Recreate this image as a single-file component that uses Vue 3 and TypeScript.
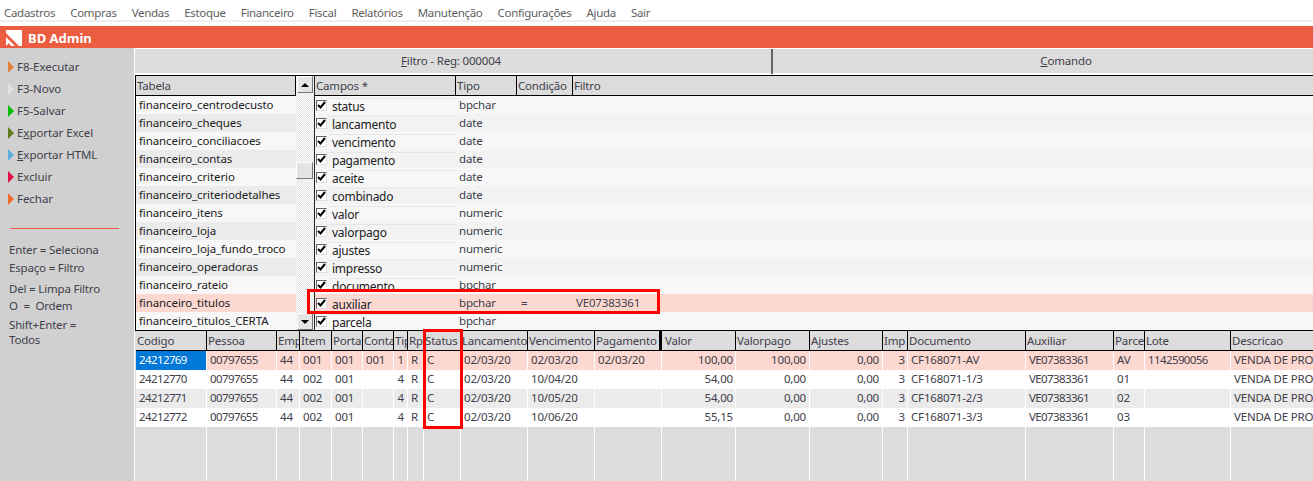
<script setup lang="ts">
const menus = ['Cadastros','Compras','Vendas','Estoque','Financeiro','Fiscal','Relatórios','Manutenção','Configurações','Ajuda','Sair']
const actions = [
  { pre:'F8-Executar', u:'', post:'', color:'#e0803c' },
  { pre:'F3-Novo', u:'', post:'', color:'#e2e2e2' },
  { pre:'F5-Salvar', u:'', post:'', color:'#00c000' },
  { pre:'E', u:'x', post:'portar Excel', color:'#5f7f1f' },
  { pre:'', u:'E', post:'xportar HTML', color:'#5aaedc' },
  { pre:'Excluir', u:'', post:'', color:'#e01048' },
  { pre:'Fechar', u:'', post:'', color:'#f06a30' },
]
const tables = ['financeiro_centrodecusto','financeiro_cheques','financeiro_conciliacoes','financeiro_contas','financeiro_criterio','financeiro_criteriodetalhes','financeiro_itens','financeiro_loja','financeiro_loja_fundo_troco','financeiro_operadoras','financeiro_rateio','financeiro_titulos','financeiro_titulos_CERTA']
const fields = [
  ['status','bpchar'],['lancamento','date'],['vencimento','date'],['pagamento','date'],['aceite','date'],['combinado','date'],['valor','numeric'],['valorpago','numeric'],['ajustes','numeric'],['impresso','numeric'],['documento','bpchar'],['auxiliar','bpchar','=','VE07383361'],['parcela','bpchar'],
]
const cols = [
  ['Codigo',71],['Pessoa',70],['Emp',23],['Item',32],['Porta',31],['Conta',31],['Tip',14],['Rp',16],['Status',37],['Lancamento',67],['Vencimento',67],['Pagamento',67],['Valor',74],['Valorpago',74],['Ajustes',73],['Imp',25],['Documento',118],['Auxiliar',88],['Parce',31],['Lote',86],['Descricao',120],
] as [string, number][]
const gridCols = cols.map(c => c[1] + 'px').join(' ')
const right = new Set([12,13,14,15,6])
const tight = new Set([0,1,17,19])
const snug = new Set([12,15])
const rows = [
  ['24212769','00797655','44','001','001','001','1','R','C','02/03/20','02/03/20','02/03/20','100,00','100,00','0,00','3','CF168071-AV','VE07383361','AV','1142590056','VENDA DE PRODUTOS'],
  ['24212770','00797655','44','002','001','','4','R','C','02/03/20','10/04/20','','54,00','0,00','0,00','3','CF168071-1/3','VE07383361','01','','VENDA DE PRODUTOS'],
  ['24212771','00797655','44','002','001','','4','R','C','02/03/20','10/05/20','','54,00','0,00','0,00','3','CF168071-2/3','VE07383361','02','','VENDA DE PRODUTOS'],
  ['24212772','00797655','44','002','001','','4','R','C','02/03/20','10/06/20','','55,15','0,00','0,00','3','CF168071-3/3','VE07383361','03','','VENDA DE PRODUTOS'],
]
</script>

<template>
  <div class="app">
    <nav class="menu"><span v-for="m in menus" :key="m">{{ m }}</span></nav>
    <header class="brand">
      <svg width="16" height="16" viewBox="0 0 16 16"><path d="M0 0H16V16H13L0 3Z M0 7L9 16H5L3 13L0 16Z" fill="#fff"/></svg>
      <b>BD Admin</b>
    </header>
    <div class="body">
      <aside class="side">
        <div class="actions">
          <div v-for="a in actions" :key="a.pre + a.post" class="action">
            <i class="tri" :style="{ borderLeftColor: a.color }"></i>
            <span>{{ a.pre }}<u>{{ a.u }}</u>{{ a.post }}</span>
          </div>
        </div>
        <hr class="rule" />
        <p class="h1">Enter = Seleciona</p>
        <p class="h2">Espaço = Filtro</p>
        <p class="h3">Del = Limpa Filtro</p>
        <p class="h4">O &nbsp;= &nbsp;Ordem</p>
        <p class="h5">Shift+Enter =<br />Todos</p>
      </aside>
      <main class="main">
        <div class="tabs">
          <div class="tab tab1"><u>F</u>iltro - Reg: 000004</div>
          <div class="tab tab2"><u>C</u>omando</div>
        </div>
        <div class="upper">
          <section class="tablesPane">
            <div class="head"><span>Tabela</span></div>
            <div v-for="(t, i) in tables" :key="t" class="trow" :class="{ alt: i % 2 === 1, hit: i === 11 }">{{ t }}</div>
          </section>
          <div class="scroll">
            <div class="sbtn"><i class="up"></i></div>
            <div class="track"><div class="thumb"></div></div>
            <div class="sbtn"><i class="down"></i></div>
          </div>
          <section class="fieldsPane">
            <div class="fhead"><span>Campos *</span><span>Tipo</span><span>Condição</span><span>Filtro</span></div>
            <div v-for="(f, i) in fields" :key="f[0]" class="frow" :class="{ alt: i % 2 === 1, hit: i === 11 }">
              <div class="fname">
                <span class="check"><svg width="9" height="9" viewBox="0 0 9 9"><path d="M1 4L3.5 6.5L8 1" fill="none" stroke="#000" stroke-width="2"/></svg></span>
                <span class="fn">{{ f[0] }}</span>
              </div>
              <span>{{ f[1] }}</span>
              <span class="cond">{{ f[2] }}</span>
              <span class="val">{{ f[3] }}</span>
            </div>
          </section>
        </div>
        <section class="lower">
          <div class="ghead" :style="{ gridTemplateColumns: gridCols }">
            <span v-for="(c, ci) in cols" :key="c[0]" class="gh" :class="{ thick: ci === 11, afterThick: ci === 12 }">{{ c[0] }}</span>
          </div>
          <div v-for="(r, ri) in rows" :key="ri" class="grow" :style="{ gridTemplateColumns: gridCols }">
            <span v-for="(v, ci) in r" :key="ci" class="gc"
              :class="{ num: right.has(ci), tight: tight.has(ci), snug: snug.has(ci), sel: ri === 0 && ci === 0, first: ri === 0, alt: ri === 2 }">{{ v }}</span>
          </div>
          <div class="gempty" :style="{ gridTemplateColumns: gridCols }">
            <span v-for="c in cols" :key="c[0]" class="ge"></span>
          </div>
        </section>
      </main>
    </div>
    <div class="mark m1"></div>
    <div class="mark m2"></div>
  </div>
</template>

<style>
html, body { margin: 0; overflow: hidden; background: #fff; }
</style>

<style scoped>
.app { position: relative; width: 1313px; height: 481px; overflow: hidden; font: 11.5px/18px "Noto Sans", sans-serif; letter-spacing: -0.18px; color: #40404a; background: #fff; }
.menu { height: 26px; display: flex; gap: 15px; padding: 2px 0 0 4px; box-sizing: border-box; color: #606060; line-height: 22px; letter-spacing: -0.3px; box-shadow: inset 0 -4px 0 #fff, inset 0 -6px 0 #eee; }
.brand { height: 22px; background: #ec5c40; color: #fff; display: flex; align-items: center; gap: 6px; padding: 1px 0 0 6px; box-sizing: border-box; font-size: 13px; letter-spacing: 0; }
.body { display: flex; height: 433px; }
.side { width: 134px; flex: none; background: #d0d0d0; border-right: 1px solid #fff; padding-top: 8px; }
.actions { display: flex; flex-direction: column; }
.action { height: 22px; display: flex; align-items: center; gap: 3px; padding-left: 8px; letter-spacing: -0.05px; }
.tri { width: 0; height: 0; border-left: 6px solid; border-top: 6px solid transparent; border-bottom: 6px solid transparent; }
.rule { border: 0; height: 1px; background: #ec5c40; margin: 18px 15px 0 10px; }
.side p { margin: 0; padding-left: 9px; }
.h1 { margin-top: 12px !important; }
.h3 { margin-top: 3px !important; }
.h5 { margin-top: 3px !important; line-height: 15px; }
.h4 { line-height: 16px; }
.main { width: 1178px; flex: none; background: #dcdcdc; }
.tabs { display: flex; height: 27px; box-sizing: content-box; border-bottom: 1px solid #000; box-shadow: inset 0 1px 0 #fff, inset 0 -2px 0 #fff; }
.tab { line-height: 24px; text-align: center; height: 25px; margin-top: 1px; white-space: nowrap; }
.tab1 { flex: none; width: 636px; border-right: 2px solid #666; text-indent: -4px; }
.tab2 { flex: none; width: 586px; }
.upper { display: flex; height: 254px; background: #f7f7f7; border-bottom: 1px solid #000; overflow: hidden; }
.tablesPane { width: 160px; flex: none; border-left: 1px solid #000; }
.head { height: 19px; background: #dcdcdc; border-bottom: 1px solid #000; border-right: 1px solid #000; box-sizing: content-box; padding-left: 1px; line-height: 20px; }
.trow { height: 18px; padding-left: 3px; background: #f7f7f7; white-space: nowrap; color: #222; letter-spacing: -0.1px; }
.trow.alt { background: #ebebeb; }
.trow.hit { background: #fcd8d0; }
.scroll { width: 18px; flex: none; display: flex; flex-direction: column; background: repeating-conic-gradient(#e6e6e6 0 25%, #fafafa 0 50%) 0 0 / 2px 2px; }
.sbtn { height: 17px; width: 16px; margin-left: 1px; box-sizing: border-box; background: #e4e4e4; border: 1px solid; border-color: #fff #777 #777 #fff; display: flex; align-items: center; justify-content: center; }
.up, .down { width: 0; height: 0; border-left: 4px solid transparent; border-right: 4px solid transparent; }
.up { border-bottom: 4px solid #000; }
.down { border-top: 4px solid #000; }
.track { flex: 1; padding-top: 69px; }
.thumb { height: 17px; width: 17px; box-sizing: border-box; background: #e4e4e4; border: 1px solid; border-color: #fff #777 #777 #fff; }
.fieldsPane { flex: 1; border-left: 1px solid #222; }
.fhead { height: 19px; box-sizing: content-box; display: grid; grid-template-columns: 141px 61px 56px 1fr; background: #dcdcdc; border-bottom: 1px solid #000; line-height: 20px; }
.fhead span { padding-left: 1px; border-right: 1px solid #000; }
.fhead span:last-child { border-right: 0; }
.frow { height: 18px; display: grid; grid-template-columns: 141px 61px 56px 1fr; background: #f7f7f7; color: #40404a; }
.frow > span:nth-child(2) { padding-left: 3px; line-height: 17px; }
.frow.alt { background: #f3f3f3; }
.frow.hit { background: #fcd8d0; }
.fname { display: flex; align-items: flex-start; }
.check { width: 9px; height: 9px; margin: 4px 0 0 1px; border: 1px solid; border-color: #666 #ddd #ddd #666; background: #fff; display: flex; }
.fn { margin: 2px 0 0 2px; padding-left: 3px; flex: 1; height: 15px; border-top: 1px solid #e6e6e6; line-height: 16px; color: #222; font-size: 12px; letter-spacing: -0.25px; }
.cond { padding-left: 4px; line-height: 17px; }
.val { padding-left: 3px; line-height: 17px; }
.lower { flex: 1; }
.ghead, .grow, .gempty { display: grid; margin-left: 1px; }
.ghead { height: 19px; box-sizing: content-box; border-bottom: 1px solid #000; }
.gh { border-right: 1px solid #000; padding-left: 1px; overflow: hidden; white-space: nowrap; line-height: 20px; }
.gh.thick { border-right-width: 3px; }
.gh.afterThick { padding-left: 3px; }
.gc { height: 19px; border-right: 1px solid #fff; padding: 0 3px; white-space: nowrap; overflow: hidden; background: #fff; line-height: 17px; }
.gc.tight { letter-spacing: -0.6px; }
.gc.first { background: #fcd8d0; }
.gc.alt { background: #ebebeb; }
.gc.sel { background: #0078d7; color: #fff; }
.gc.num { text-align: right; padding-right: 3px; }
.gc.snug { padding-right: 2px; }
.gempty { height: 60px; }
.ge { border-right: 1px solid #fff; }
.mark { position: absolute; border: 3px solid #f00; box-sizing: border-box; }
.m1 { left: 307px; top: 289px; width: 353px; height: 25px; }
.m2 { left: 423px; top: 329px; width: 40px; height: 100px; }
</style>
